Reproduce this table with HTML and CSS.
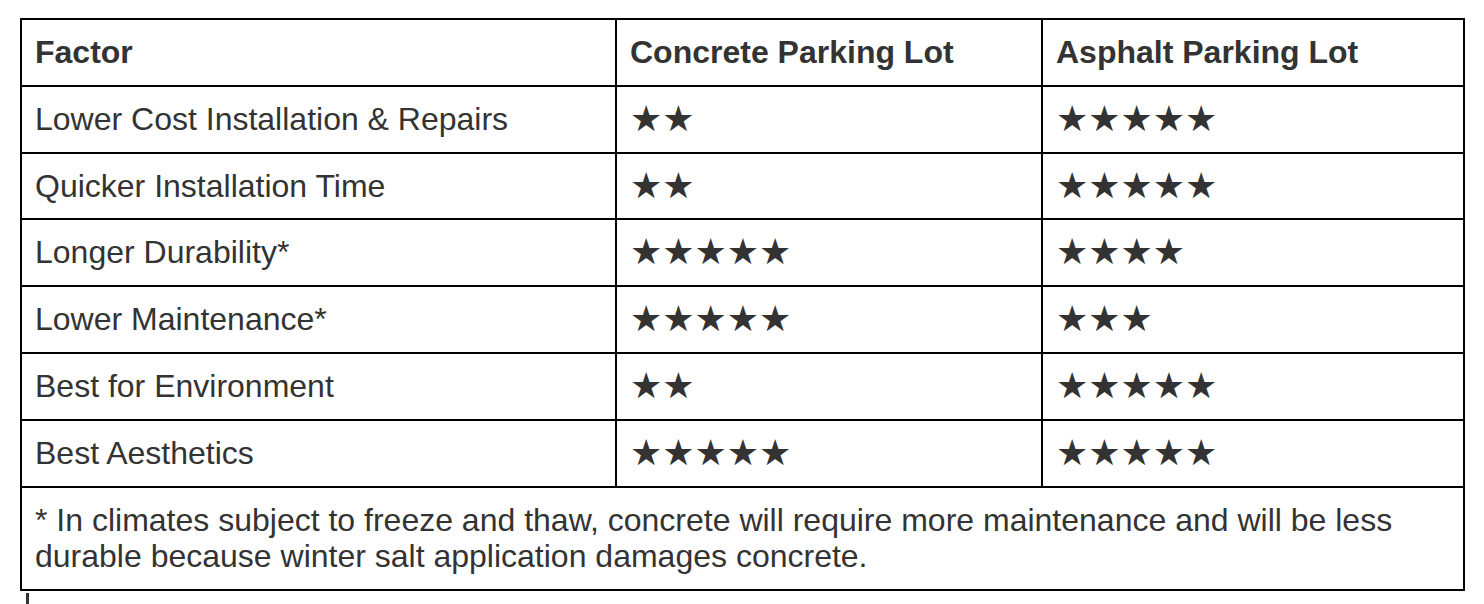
FILE: index.html
```html
<!DOCTYPE html>
<html>
<head>
<meta charset="utf-8">
<link rel="stylesheet" href="styles.css">
</head>
<body>
<table class="compare">
  <colgroup>
    <col class="c1">
    <col class="c2">
    <col class="c3">
  </colgroup>
  <thead>
    <tr><th>Factor</th><th>Concrete Parking Lot</th><th>Asphalt Parking Lot</th></tr>
  </thead>
  <tbody>
    <tr><td>Lower Cost Installation &amp; Repairs</td><td class="stars">★★</td><td class="stars">★★★★★</td></tr>
    <tr><td>Quicker Installation Time</td><td class="stars">★★</td><td class="stars">★★★★★</td></tr>
    <tr><td>Longer Durability*</td><td class="stars">★★★★★</td><td class="stars">★★★★</td></tr>
    <tr><td>Lower Maintenance*</td><td class="stars">★★★★★</td><td class="stars">★★★</td></tr>
    <tr><td>Best for Environment</td><td class="stars">★★</td><td class="stars">★★★★★</td></tr>
    <tr><td>Best Aesthetics</td><td class="stars">★★★★★</td><td class="stars">★★★★★</td></tr>
    <tr><td colspan="3" class="note">* In climates subject to freeze and thaw, concrete will require more maintenance and will be less durable because winter salt application damages concrete.</td></tr>
  </tbody>
</table>
<div class="next"></div>
</body>
</html>
```
FILE: styles.css
```css
html, body {
  margin: 0;
  padding: 0;
  background: #fff;
}
body {
  font-family: "Liberation Sans", Arial, sans-serif;
  color: #333;
  font-size: 32px;
  line-height: 36.8px;
}
.compare {
  margin: 18px 0 0 20px;
  width: 1443px;
  border-collapse: collapse;
  table-layout: fixed;
}
.c1 { width: 595px; }
.c2 { width: 426px; }
.c3 { width: 422px; }
.compare th,
.compare td {
  border: 2px solid #000;
  padding: 14px 13px;
  text-align: left;
  vertical-align: top;
}
.compare th {
  font-weight: bold;
}
.stars {
  font-family: "DejaVu Sans", sans-serif;
  font-size: 36px;
}
.next {
  margin: 2px 0 0 26px;
  width: 3px;
  height: 12px;
  background: #333;
}
```
